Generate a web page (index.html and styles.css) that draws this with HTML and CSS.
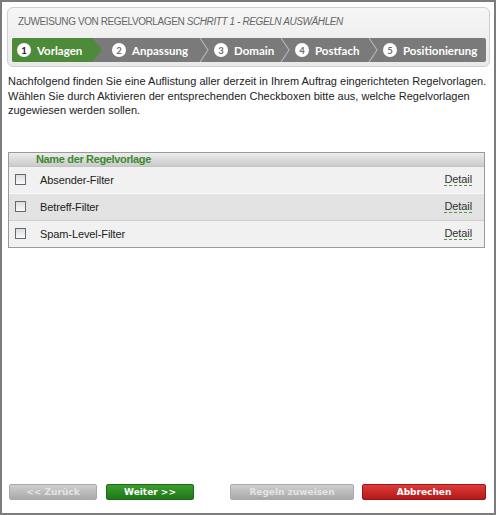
FILE: index.html
```html
<!DOCTYPE html>
<html lang="de">
<head>
  <meta charset="UTF-8">
  <title>Zuweisung von Regelvorlagen</title>
  <link rel="stylesheet" href="styles.css">
</head>
<body>

  <div class="page">

    <!-- Kopf mit Schritten -->
    <div class="head">
      <div class="title">ZUWEISUNG VON REGELVORLAGEN <em>SCHRITT 1 - REGELN AUSWÄHLEN</em></div>
      <div class="steps">
        <div class="step step-1 active"><span class="num">1</span>Vorlagen</div>
        <div class="step step-2"><span class="num">2</span>Anpassung</div>
        <div class="step step-3">
          <svg class="sep" width="10" height="24" viewBox="0 0 10 24"><polyline points="1,0 9,12 1,24" fill="none" stroke="#b4b4b4" stroke-width="1.2"/></svg>
          <span class="num">3</span>Domain
        </div>
        <div class="step step-4">
          <svg class="sep" width="10" height="24" viewBox="0 0 10 24"><polyline points="1,0 9,12 1,24" fill="none" stroke="#b4b4b4" stroke-width="1.2"/></svg>
          <span class="num">4</span>Postfach
        </div>
        <div class="step step-5">
          <svg class="sep" width="10" height="24" viewBox="0 0 10 24"><polyline points="1,0 9,12 1,24" fill="none" stroke="#b4b4b4" stroke-width="1.2"/></svg>
          <span class="num">5</span>Positionierung
        </div>
      </div>
    </div>

    <p class="intro">Nachfolgend finden Sie eine Auflistung aller derzeit in Ihrem Auftrag eingerichteten Regelvorlagen. Wählen Sie durch Aktivieren der entsprechenden Checkboxen bitte aus, welche Regelvorlagen zugewiesen werden sollen.</p>

    <!-- Liste der Regelvorlagen -->
    <div class="list">
      <div class="list-head">Name der Regelvorlage</div>
      <div class="row"><span class="check"></span><span class="name">Absender-Filter</span><a class="detail">Detail</a></div>
      <div class="row alt"><span class="check"></span><span class="name">Betreff-Filter</span><a class="detail">Detail</a></div>
      <div class="row"><span class="check"></span><span class="name">Spam-Level-Filter</span><a class="detail">Detail</a></div>
    </div>

    <div class="buttons">
      <div class="group">
        <button class="btn grey">&lt;&lt; Zurück</button>
        <button class="btn green">Weiter &gt;&gt;</button>
      </div>
      <div class="group">
        <button class="btn grey wide">Regeln zuweisen</button>
        <button class="btn red wide">Abbrechen</button>
      </div>
    </div>

  </div>

</body>
</html>
```

FILE: styles.css
```css
html, body { margin: 0; padding: 0; background: #fff; }
.page { width: 496px; height: 515px; box-sizing: border-box; border: 2px solid #7c7c7c; display: flex; flex-direction: column; font-family: "Liberation Sans", Arial, sans-serif; }

.head { margin: 5px 4px 0 5px; border: 1px solid #cfcfcf; border-radius: 6px; background: linear-gradient(#f6f6f6, #e9e9e9); padding: 0 3px 4px 4px; }
.title { font-size: 10px; color: #666; height: 30px; line-height: 27px; padding-left: 6px; letter-spacing: -0.4px; }
.title em { font-style: italic; }

.steps { height: 24px; background: #7a7a7a; border-radius: 2px; display: flex; align-items: center; font-family: Lato, "Open Sans", sans-serif; font-weight: bold; font-size: 11.5px; color: #fff; overflow: hidden; }
.step { height: 24px; display: flex; align-items: center; box-sizing: border-box; }
.num { width: 14px; height: 14px; border-radius: 50%; background: #fff; color: #6e6e6e; font-size: 9.5px; display: flex; align-items: center; justify-content: center; margin-right: 6px; }
.step-1 { width: 90px; padding-left: 5px; background: #4d8a3a; clip-path: polygon(0 0, 80px 0, 90px 12px, 80px 24px, 0 24px); }
.step-1 .num { color: #222; }
.step-2 { width: 97px; padding-left: 10px; }
.step-3 { width: 81px; }
.step-4 { width: 88px; }
.step-5 { flex: 1; }
.sep { margin-right: 5px; flex: none; }

.intro { margin: 7px 6px 0 6px; font-size: 11px; line-height: 14.5px; color: #222; }

.list { margin: 34px 9px 0 6px; border: 1px solid #9a9a9a; }
.list-head { height: 13px; line-height: 13px; background: linear-gradient(#ececec, #cbcbcb); border-bottom: 1px solid #c4c4c4; color: #3d8a2e; font-weight: bold; font-size: 11px; padding-left: 27px; letter-spacing: -0.35px; }
.row { height: 26px; display: flex; align-items: center; background: #f1f1f1; border-bottom: 1px solid #fafafa; font-size: 11px; color: #222; letter-spacing: -0.1px; }
.row.alt { background: #e3e3e3; border-bottom: 1px solid #cfcfcf; }
.row:last-child { border-bottom: none; }
.check { width: 9px; height: 9px; border: 1px solid #5e6a76; background: linear-gradient(#ddd, #fafafa); margin: 0 14px 0 6px; }
.name { flex: 1; }
.detail { margin-right: 12px; color: #333; border-bottom: 1px dashed #4c9a3c; line-height: 12px; }

.buttons { margin-top: auto; margin-bottom: 13px; display: flex; justify-content: space-between; padding: 0 8px 0 7px; }
.group { display: flex; gap: 9px; }
.group + .group { gap: 8px; }
.btn { width: 88px; height: 16px; padding: 0; border: 1px solid #999; border-radius: 2px; font-family: "DejaVu Sans", Verdana, sans-serif; font-weight: bold; font-size: 9px; color: #fff; }
.btn.wide { width: 124px; }
.btn.grey { background: linear-gradient(#cfcfcf, #a9a9a9); border-color: #aaa; color: #e4e4e4; }
.btn.green { background: linear-gradient(#3c9e2c, #1d7619); border-color: #1a6a16; }
.btn.red { background: linear-gradient(#df3b3b, #b31818); border-color: #9c1414; }
```
